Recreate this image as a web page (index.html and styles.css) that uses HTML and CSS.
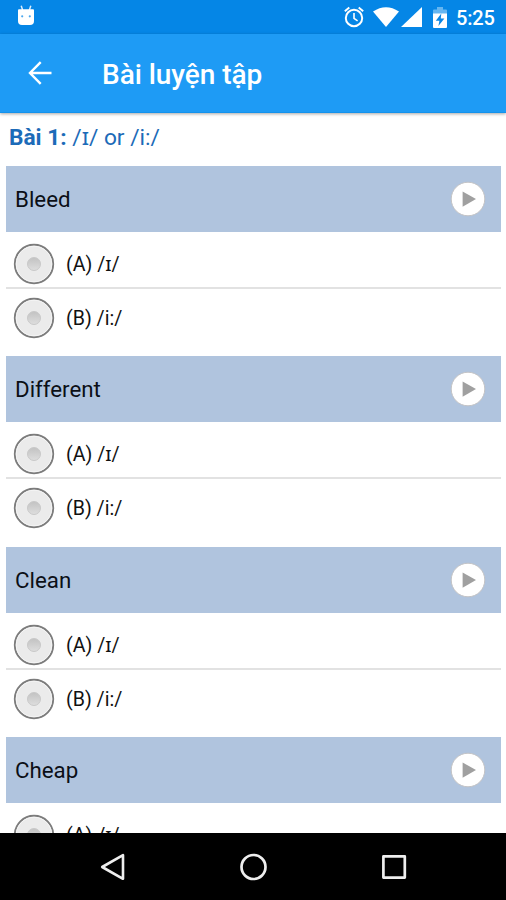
FILE: index.html
```html
<!DOCTYPE html>
<html lang="vi">
<head>
<meta charset="utf-8">
<title>Bài luyện tập</title>
<link rel="stylesheet" href="styles.css">
</head>
<body>
<svg class="defs" width="0" height="0" aria-hidden="true">
  <defs>
    <linearGradient id="dot" x1="0" y1="0" x2="0" y2="1"><stop offset="0" stop-color="#c2c2c2"/><stop offset="1" stop-color="#dedede"/></linearGradient>
    <symbol id="radio" viewBox="0 0 42 42">
      <circle cx="21" cy="21" r="19.2" fill="#ebebeb" stroke="#7c7c7c" stroke-width="1.9"/>
      <circle cx="21" cy="21" r="17.8" fill="none" stroke="#f5f5f5" stroke-width="1"/>
      <circle cx="21" cy="21" r="6.5" fill="url(#dot)" stroke="#c9c9c9" stroke-width="1"/>
    </symbol>
    <symbol id="play" viewBox="0 0 36 36">
      <circle cx="18" cy="18" r="16.8" fill="#fff" stroke="#c2c2c4" stroke-width="1"/>
      <path d="M12.6 10.4v15.4L26 18.1z" fill="#a0a0a0"/>
    </symbol>
  </defs>
</svg>
<div class="screen">
  <div class="status">
    <svg class="droid" width="18" height="21" viewBox="0 0 18 21"><path d="M4.2.8 5.6 5M13.8.8 12.4 5" stroke="#d9edfc" stroke-width="1.5"/><path d="M1 5.3Q1 4.3 2 4.3h14q1 0 1 1V16q0 4-4 4H5q-4 0-4-4z" fill="#fff"/><circle cx="5.2" cy="11.3" r="1.1" fill="#4ba7ee"/><circle cx="12.8" cy="11.3" r="1.1" fill="#4ba7ee"/></svg>
    <svg class="alarm" width="20" height="22" viewBox="0 0 20 22" fill="none" stroke="#fff"><circle cx="10" cy="12" r="8.2" stroke-width="2"/><path d="M.8 5.2 5.3 1.5M19.2 5.2 14.7 1.5" stroke-width="1.9"/><path d="M10 7v5.4l3.6 2.5" stroke-width="1.6"/></svg>
    <svg class="wifi" width="26" height="20" viewBox="0 0 26 20"><path d="M0 4.5Q13-4.2 26 4.5L13 20z" fill="#fff"/></svg>
    <svg class="signal" width="21" height="20" viewBox="0 0 21 20"><path d="M0 20 21 0v20z" fill="#fff"/></svg>
    <svg class="battery" width="14" height="21" viewBox="0 0 14 21"><path d="M0 7V3.5q0-1 1-1h3V0h6v2.5h3q1 0 1 1V7z" fill="#65b6f1"/><path d="M0 6.5h14V20q0 1-1 1H1q-1 0-1-1z" fill="#fff"/><path d="M8.3 6.5 2.8 13.8h3.6L5.4 19l6-7.5H7.8z" fill="#0986e5"/></svg>
    <span class="clock">5:25</span>
  </div>
  <header class="appbar">
    <svg class="back" width="24" height="24" viewBox="0 0 24 24" fill="none" stroke="#fff" stroke-width="2.4"><path d="M12.7 1.2 2 12l10.7 10.8M2 12h21.5"/></svg>
    <h1>Bài luyện tập</h1>
  </header>
  <main class="content">
    <p class="lesson"><b>Bài 1:</b> /ɪ/ or /i:/</p>
    <section class="question">
      <div class="word"><span>Bleed</span><svg class="play"><use href="#play"/></svg></div>
      <div class="option"><svg class="radio"><use href="#radio"/></svg><span>(A) /ɪ/</span></div>
      <div class="option last"><svg class="radio"><use href="#radio"/></svg><span>(B) /i:/</span></div>
    </section>
    <section class="question">
      <div class="word"><span>Different</span><svg class="play"><use href="#play"/></svg></div>
      <div class="option"><svg class="radio"><use href="#radio"/></svg><span>(A) /ɪ/</span></div>
      <div class="option last"><svg class="radio"><use href="#radio"/></svg><span>(B) /i:/</span></div>
    </section>
    <section class="question">
      <div class="word"><span>Clean</span><svg class="play"><use href="#play"/></svg></div>
      <div class="option"><svg class="radio"><use href="#radio"/></svg><span>(A) /ɪ/</span></div>
      <div class="option last"><svg class="radio"><use href="#radio"/></svg><span>(B) /i:/</span></div>
    </section>
    <section class="question">
      <div class="word"><span>Cheap</span><svg class="play"><use href="#play"/></svg></div>
      <div class="option"><svg class="radio"><use href="#radio"/></svg><span>(A) /ɪ/</span></div>
    </section>
  </main>
  <nav class="navbar">
    <svg width="28" height="28" viewBox="0 0 28 28" fill="none" stroke="#eee" stroke-width="2.6" stroke-linejoin="round"><path d="M3.2 14 24 2.2v23.6z"/></svg>
    <svg width="28" height="28" viewBox="0 0 28 28" fill="none" stroke="#eee" stroke-width="2.7"><circle cx="14.5" cy="14" r="12"/></svg>
    <svg width="28" height="28" viewBox="0 0 28 28" fill="none" stroke="#eee" stroke-width="2.7" stroke-linejoin="round"><path d="M3.4 3.4h21.4v21.2H3.4z"/></svg>
  </nav>
</div>
</body>
</html>
```
FILE: styles.css
```css
* { box-sizing: border-box; }
body { margin: 0; background: #fff; font-family: Roboto, "Noto Sans", sans-serif; }
svg { display: block; flex: none; }
.defs { width: 0; height: 0; position: absolute; }
.screen { width: 506px; height: 900px; display: flex; flex-direction: column; overflow: hidden; }

.status { flex: none; height: 34px; padding: 0 11px 0 17px; display: flex; align-items: flex-start; background: #0586e6; color: #fff; }
.droid { margin-top: 5px; }
.alarm { margin: 6px 0 0 auto; }
.wifi { margin: 7px 0 0 9px; }
.signal { margin: 7px 0 0 2px; }
.battery { margin: 7px 0 0 11px; }
.clock { margin-left: 9px; width: 39px; font-size: 20px; font-weight: 500; line-height: 36px; letter-spacing: -0.2px; white-space: nowrap; }

.appbar { flex: none; height: 79px; padding-left: 28px; display: flex; align-items: center; background: #1e9bf5; color: #fff; border-bottom: 1px solid #1492ec; box-shadow: 0 1px 3px rgba(0, 0, 0, .35); position: relative; }
.appbar h1 { margin: 3px 0 0 50px; font-size: 28px; line-height: 36px; font-weight: 500; letter-spacing: -0.05px; }

.content { flex: 1; min-height: 0; overflow: hidden; padding: 0 5px 0 6px; }
.lesson { margin: 0; height: 53px; padding: 9px 0 0 3px; font-size: 22.7px; line-height: 31px; color: #1c6bb8; }
.lesson b { font-weight: 700; }
.question { height: 190.4px; }
.word { height: 65.8px; padding: 0 15px 0 9px; display: flex; align-items: center; justify-content: space-between; background: #b0c4de; color: #0b0f16; font-size: 22.3px; }
.play { width: 36px; height: 36px; }
.option { height: 57.2px; padding: 11px 0 0 7px; display: flex; align-items: flex-start; border-bottom: 2px solid #e2e2e2; color: #111; font-size: 19.6px; line-height: 43.6px; }
.option.last { padding-top: 8px; border-bottom: 0; }
.radio { width: 42px; height: 42px; margin-right: 11px; }

.navbar { flex: none; height: 67px; display: flex; justify-content: center; gap: 112.5px; align-items: center; background: #000; }
```
